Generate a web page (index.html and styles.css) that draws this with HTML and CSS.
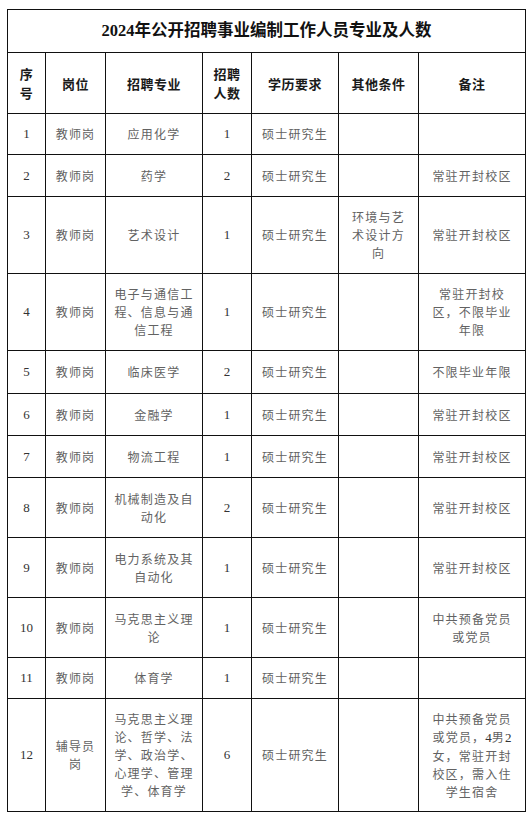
FILE: index.html
```html
<!DOCTYPE html>
<html lang="zh-CN">
<head>
<meta charset="utf-8">
<title>2024年公开招聘事业编制工作人员专业及人数</title>
<link rel="stylesheet" href="styles.css">
</head>
<body>
<table class="sheet">
  <colgroup>
    <col class="c-no"><col class="c-post"><col class="c-major"><col class="c-num"><col class="c-edu"><col class="c-other"><col class="c-note">
  </colgroup>
  <tr class="r-title"><td colspan="7" class="title"><span class="num">2024</span>年公开招聘事业编制工作人员专业及人数</td></tr>
  <tr class="r-head">
    <th>序<br>号</th><th>岗位</th><th>招聘专业</th><th>招聘<br>人数</th><th>学历要求</th><th>其他条件</th><th>备注</th>
  </tr>
  <tr class="r1"><td class="num">1</td><td>教师岗</td><td>应用化学</td><td class="num">1</td><td>硕士研究生</td><td></td><td></td></tr>
  <tr class="r1b"><td class="num">2</td><td>教师岗</td><td>药学</td><td class="num">2</td><td>硕士研究生</td><td></td><td>常驻开封校区</td></tr>
  <tr class="r3"><td class="num">3</td><td>教师岗</td><td>艺术设计</td><td class="num">1</td><td>硕士研究生</td><td>环境与艺<br>术设计方<br>向</td><td>常驻开封校区</td></tr>
  <tr class="r3"><td class="num">4</td><td>教师岗</td><td>电子与通信工<br>程、信息与通<br>信工程</td><td class="num">1</td><td>硕士研究生</td><td></td><td>常驻开封校<br>区，不限毕业<br>年限</td></tr>
  <tr class="r1c"><td class="num">5</td><td>教师岗</td><td>临床医学</td><td class="num">2</td><td>硕士研究生</td><td></td><td>不限毕业年限</td></tr>
  <tr class="r1b"><td class="num">6</td><td>教师岗</td><td>金融学</td><td class="num">1</td><td>硕士研究生</td><td></td><td>常驻开封校区</td></tr>
  <tr class="r1b"><td class="num">7</td><td>教师岗</td><td>物流工程</td><td class="num">1</td><td>硕士研究生</td><td></td><td>常驻开封校区</td></tr>
  <tr class="r2"><td class="num">8</td><td>教师岗</td><td>机械制造及自<br>动化</td><td class="num">2</td><td>硕士研究生</td><td></td><td>常驻开封校区</td></tr>
  <tr class="r2"><td class="num">9</td><td>教师岗</td><td>电力系统及其<br>自动化</td><td class="num">1</td><td>硕士研究生</td><td></td><td>常驻开封校区</td></tr>
  <tr class="r2"><td class="num">10</td><td>教师岗</td><td>马克思主义理<br>论</td><td class="num">1</td><td>硕士研究生</td><td></td><td>中共预备党员<br>或党员</td></tr>
  <tr class="r1"><td class="num">11</td><td>教师岗</td><td>体育学</td><td class="num">1</td><td>硕士研究生</td><td></td><td></td></tr>
  <tr class="r5"><td class="num">12</td><td>辅导员<br>岗</td><td>马克思主义理<br>论、哲学、法<br>学、政治学、<br>心理学、管理<br>学、体育学</td><td class="num">6</td><td>硕士研究生</td><td></td><td>中共预备党员<br>或党员，<span class="num">4</span>男<span class="num">2</span><br>女，常驻开封<br>校区，需入住<br>学生宿舍</td></tr>
</table>
</body>
</html>
```

FILE: styles.css
```css
html, body {
  margin: 0;
  padding: 0;
  background: #ffffff;
}

body {
  padding: 9px 0 0 7px;
}

.sheet {
  border-collapse: collapse;
  table-layout: fixed;
  width: 518px;
  font-family: "Noto Sans CJK SC", "Noto Sans", sans-serif;
  font-size: 12px;
  line-height: 18px;
  color: #626262;
}

.c-no { width: 38px; }
.c-post { width: 60px; }
.c-major { width: 97px; }
.c-num { width: 49px; }
.c-edu { width: 87px; }
.c-other { width: 80px; }
.c-note { width: 107px; }

.sheet td,
.sheet th {
  border: 1px solid #111111;
  padding: 0 1px;
  text-align: center;
  vertical-align: middle;
  letter-spacing: 1.2px;
  white-space: nowrap;
  overflow: hidden;
}

.sheet th {
  font-weight: 700;
  font-size: 13px;
  line-height: 19px;
  letter-spacing: 0.5px;
  color: #1a1a1a;
}

.sheet .title {
  font-family: "Liberation Serif", "Noto Sans CJK SC", serif;
  font-weight: 700;
  font-size: 16.5px;
  letter-spacing: 0;
  color: #111111;
}

.sheet .title .num {
  font-family: "Liberation Serif", serif;
  font-size: 16.5px;
  color: #111111;
}

.num {
  font-family: "Liberation Serif", "Times New Roman", serif;
  font-size: 13px;
  letter-spacing: 0 !important;
  color: #333333;
}

.r-title { height: 43px; }
.r-head { height: 61px; }
.r1 { height: 41px; }
.r1b { height: 42px; }
.r1c { height: 43px; }
.r2 { height: 60px; }
.r3 { height: 77px; }
.r5 { height: 113px; }
```
